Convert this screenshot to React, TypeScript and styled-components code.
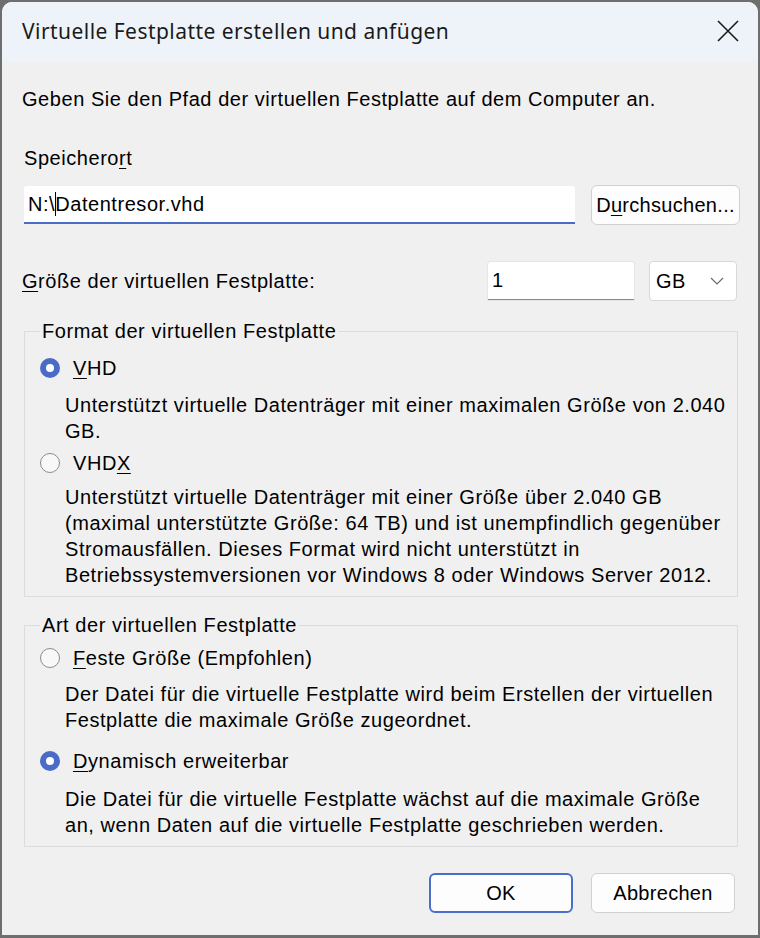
import React from "react";
import styled, { createGlobalStyle } from "styled-components";

const Global = createGlobalStyle`
  html, body { margin: 0; padding: 0; }
  body {
    background: #6e6e6e;
    width: 760px;
    height: 938px;
    overflow: hidden;
  }
`;

const Window = styled.div`
  margin: 2px 2px 0 2px;
  height: 933px;
  border-radius: 10px 10px 0 0;
  overflow: hidden;
  background: #f0f0f0;
  display: flex;
  flex-direction: column;
  font-family: "Liberation Sans", Arial, sans-serif;
  font-size: 20px;
  letter-spacing: 0.55px;
  color: #000;
`;

const TitleBar = styled.div`
  height: 60px;
  flex: none;
  background: #eef3f9;
  display: flex;
  align-items: center;
  justify-content: space-between;
  padding: 0 18px 0 20px;
`;

const Title = styled.div`
  font-family: "Noto Sans", "Segoe UI", sans-serif;
  font-size: 21px;
  letter-spacing: 0.45px;
  color: #1a1a1a;
  padding-bottom: 2px;
`;

const CloseBtn = styled.div`
  width: 24px;
  height: 24px;
  display: flex;
  align-items: center;
  justify-content: center;
  margin-top: -2px;
`;

const Content = styled.div`
  flex: 1;
  padding: 24px 18px 0 20px;
  display: flex;
  flex-direction: column;
`;

const Line = styled.div<{ $mt?: number; $ml?: number }>`
  line-height: 26px;
  height: 26px;
  white-space: nowrap;
  margin-top: ${(p) => p.$mt ?? 0}px;
  margin-left: ${(p) => p.$ml ?? 0}px;
`;

const Row = styled.div<{ $mt: number }>`
  display: flex;
  align-items: center;
  margin-top: ${(p) => p.$mt}px;
`;

const TextField = styled.div<{ $w: number; $focused?: boolean }>`
  width: ${(p) => p.$w}px;
  height: 38px;
  box-sizing: border-box;
  background: #fff;
  border-radius: 3px 3px 0 0;
  border-bottom: ${(p) => (p.$focused ? "2px solid #4a6cc5" : "1px solid #8a8a8a")};
  box-shadow: ${(p) => (p.$focused ? "none" : "0 0 0 1px #e6e6e6")};
  display: flex;
  align-items: center;
  padding-left: 4px;
  white-space: nowrap;
`;

const Caret = styled.span`
  display: inline-block;
  width: 1px;
  height: 24px;
  background: #000;
  vertical-align: middle;
  margin: 0 -1px 0 0;
`;

const Button = styled.div<{ $w: number; $primary?: boolean }>`
  width: ${(p) => p.$w}px;
  height: 40px;
  box-sizing: border-box;
  border-radius: 6px;
  border: ${(p) => (p.$primary ? "2px solid #4a6fc9" : "1px solid #d0d0d0")};
  background: #fdfdfd;
  display: flex;
  align-items: center;
  justify-content: center;
  white-space: nowrap;
  letter-spacing: 0.3px;
`;

const Select = styled.div`
  width: 88px;
  height: 40px;
  box-sizing: border-box;
  border: 1px solid #d8d8d8;
  border-radius: 4px;
  background: #fff;
  display: flex;
  align-items: center;
  justify-content: space-between;
  padding: 0 12px 0 6px;
  margin-left: 15px;
  margin-right: 3px;
`;

const Group = styled.fieldset<{ $mt: number; $pt: number }>`
  margin: ${(p) => p.$mt}px 2px 0 2px;
  border: 1px solid #dcdcdc;
  padding: ${(p) => p.$pt}px 0 8px 15px;
  display: flex;
  flex-direction: column;
  min-width: 0;
`;

const Legend = styled.legend`
  padding: 0 2px;
  line-height: 26px;
`;

const RadioRow = styled.div<{ $mt?: number }>`
  display: flex;
  align-items: center;
  height: 26px;
  margin-top: ${(p) => p.$mt ?? 0}px;
  gap: 13px;
`;

const RadioDot = styled.span<{ $on?: boolean }>`
  width: 20px;
  height: 20px;
  box-sizing: border-box;
  border-radius: 50%;
  flex: none;
  background: ${(p) => (p.$on ? "#4a6cc6" : "#f8f8f8")};
  border: ${(p) => (p.$on ? "none" : "1.5px solid #8c8c8c")};
  display: flex;
  align-items: center;
  justify-content: center;
  &::after {
    content: "";
    display: ${(p) => (p.$on ? "block" : "none")};
    width: 8px;
    height: 8px;
    border-radius: 50%;
    background: #fff;
  }
`;

const Desc = styled.div<{ $mt: number }>`
  margin-top: ${(p) => p.$mt}px;
  margin-left: 25px;
  display: flex;
  flex-direction: column;
`;

const Footer = styled.div`
  display: flex;
  justify-content: flex-end;
  gap: 18px;
  margin-top: 26px;
  padding-right: 5px;
`;

const U = styled.u`
  text-underline-offset: 3px;
  text-decoration-thickness: 1px;
`;

const Spacer = styled.div`
  flex: 1;
`;

export default function App() {
  return (
    <>
      <Global />
      <Window>
        <TitleBar>
          <Title>Virtuelle Festplatte erstellen und anfügen</Title>
          <CloseBtn>
            <svg width="22" height="22" viewBox="0 0 22 22">
              <path d="M1 1 L21 21 M21 1 L1 21" stroke="#1a1a1a" strokeWidth="1.6" fill="none" />
            </svg>
          </CloseBtn>
        </TitleBar>
        <Content>
          <Line>Geben Sie den Pfad der virtuellen Festplatte auf dem Computer an.</Line>
          <Line $mt={33} $ml={2}>
            Speichero<U>r</U>t
          </Line>
          <Row $mt={14}>
            <TextField $w={551} $focused style={{ marginLeft: 2 }}>
              N:\<Caret />Datentresor.vhd
            </TextField>
            <Spacer />
            <Button $w={149}>
              D<U>u</U>rchsuchen...
            </Button>
          </Row>
          <Row $mt={36}>
            <Line>
              <U>G</U>röße der virtuellen Festplatte:
            </Line>
            <Spacer />
            <TextField $w={146}>1</TextField>
            <Select>
              <span>GB</span>
              <svg width="14" height="8" viewBox="0 0 14 8">
                <path d="M1 1 L7 7 L13 1" stroke="#6a6a6a" strokeWidth="1.2" fill="none" />
              </svg>
            </Select>
          </Row>
          <Group $mt={17} $pt={11}>
            <Legend>Format der virtuellen Festplatte</Legend>
            <RadioRow>
              <RadioDot $on />
              <span>
                <U>V</U>HD
              </span>
            </RadioRow>
            <Desc $mt={11}>
              <Line>Unterstützt virtuelle Datenträger mit einer maximalen Größe von 2.040</Line>
              <Line>GB.</Line>
            </Desc>
            <RadioRow $mt={6}>
              <RadioDot />
              <span>
                VHD<U>X</U>
              </span>
            </RadioRow>
            <Desc $mt={8}>
              <Line>Unterstützt virtuelle Datenträger mit einer Größe über 2.040 GB</Line>
              <Line>(maximal unterstützte Größe: 64 TB) und ist unempfindlich gegenüber</Line>
              <Line>Stromausfällen. Dieses Format wird nicht unterstützt in</Line>
              <Line>Betriebssystemversionen vor Windows 8 oder Windows Server 2012.</Line>
            </Desc>
          </Group>
          <Group $mt={15} $pt={7}>
            <Legend>Art der virtuellen Festplatte</Legend>
            <RadioRow>
              <RadioDot />
              <span>
                <U>F</U>este Größe (Empfohlen)
              </span>
            </RadioRow>
            <Desc $mt={10}>
              <Line>Der Datei für die virtuelle Festplatte wird beim Erstellen der virtuellen</Line>
              <Line>Festplatte die maximale Größe zugeordnet.</Line>
            </Desc>
            <RadioRow $mt={15}>
              <RadioDot $on />
              <span>
                <U>D</U>ynamisch erweiterbar
              </span>
            </RadioRow>
            <Desc $mt={12}>
              <Line>Die Datei für die virtuelle Festplatte wächst auf die maximale Größe</Line>
              <Line>an, wenn Daten auf die virtuelle Festplatte geschrieben werden.</Line>
            </Desc>
          </Group>
          <Footer>
            <Button $w={144} $primary>
              OK
            </Button>
            <Button $w={144}>Abbrechen</Button>
          </Footer>
        </Content>
      </Window>
    </>
  );
}
